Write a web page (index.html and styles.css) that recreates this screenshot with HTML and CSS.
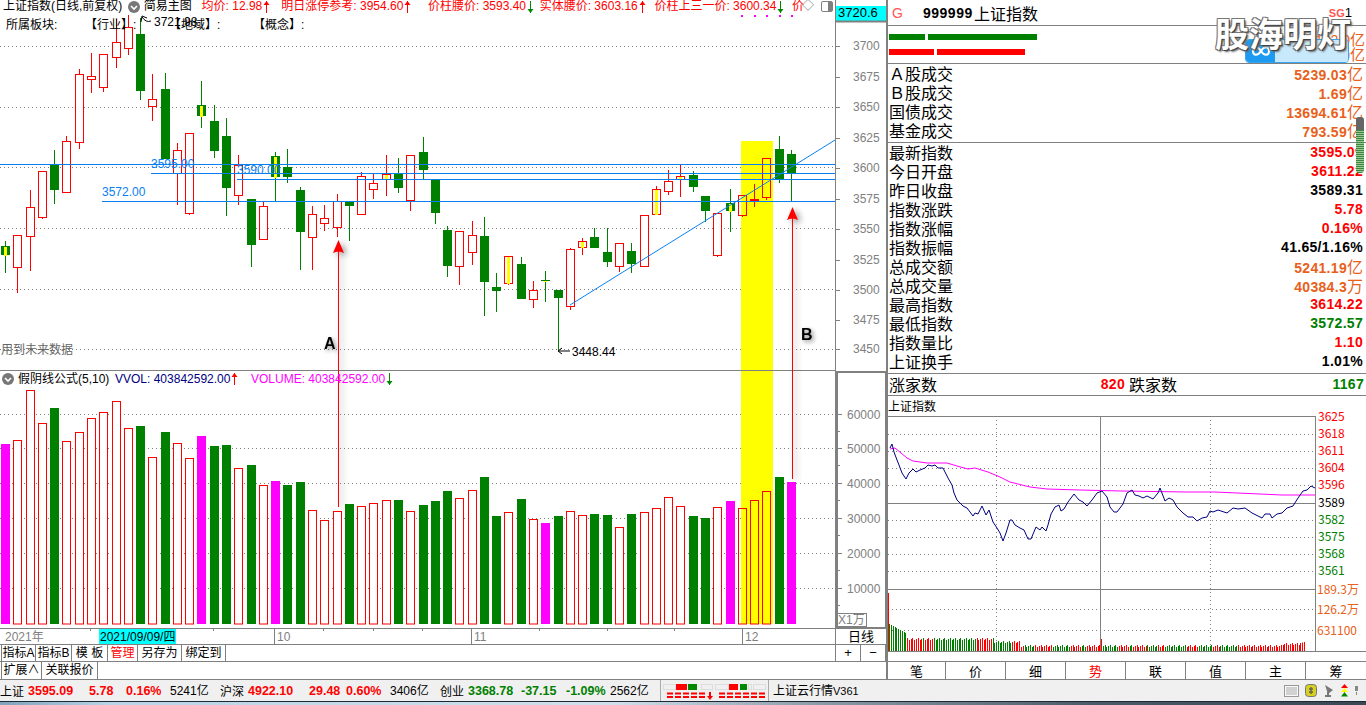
FILE: index.html
```html
<!DOCTYPE html>
<html lang="zh-CN">
<head>
    <meta charset="UTF-8">
    <title>上证指数</title>
    <link rel="stylesheet" href="styles.css">
</head>
<body>
    <svg class="defs" width="0" height="0">
        <symbol id="up" viewBox="0 0 7 12"><path d="M3.5 0v12" stroke="#f00" fill="none"/><path d="M3.5 0L6.5 4H.5z" fill="#f00"/></symbol>
        <symbol id="down" viewBox="0 0 7 12"><path d="M3.5 0v12" stroke="#080" fill="none"/><path d="M3.5 12L.5 8H6.5z" fill="#080"/></symbol>
        <symbol id="chevron" viewBox="0 0 12 12"><circle cx="6" cy="6" r="6" fill="#777"/><path d="M3 5l3 3 3-3" stroke="#fff" stroke-width="1.6" fill="none"/></symbol>
    </svg>
    <div class="app">
        <div class="workspace">
            <div class="left">
                <div class="charts">
                    <svg id="kline" class="kline" width="886" height="645"></svg>

                    <div class="quote-bar">
                        <span class="q-title">上证指数(日线,前复权)</span>
                        <svg class="ico12 q-chev"><use href="#chevron"/></svg>
                        <span class="q-main">简易主图</span>
                        <span class="q-item q-avg">均价: 12.98<svg class="arr"><use href="#up"/></svg></span>
                        <span class="q-item q-limit">明日涨停参考: 3954.60<svg class="arr"><use href="#up"/></svg></span>
                        <span class="q-item q-waist">价柱腰价: 3593.40<svg class="arr"><use href="#down"/></svg></span>
                        <span class="q-item q-body">实体腰价: 3603.16<svg class="arr"><use href="#up"/></svg></span>
                        <span class="q-item q-third">价柱上三一价: 3600.34<svg class="arr"><use href="#down"/></svg></span>
                        <span class="q-item q-cut">价</span>
                        <span class="q-diamond">◇</span>
                        <span class="q-panel"><i></i></span>
                    </div>
                    <div class="sector-bar">
                        <span class="s-first">所属板块:</span>
                        <span class="s-col">【行业】:</span>
                        <span class="s-col">【地域】:</span>
                        <span class="s-col">【概念】:</span>
                    </div>
                    <div class="future-note">用到未来数据</div>
                    <div class="vol-bar">
                        <svg class="ico12"><use href="#chevron"/></svg>
                        <span class="v-name">假阴线公式(5,10)</span>
                        <span class="v-wvol">VVOL: 403842592.00<svg class="arr"><use href="#up"/></svg></span>
                        <span class="v-vol">VOLUME: 403842592.00<svg class="arr"><use href="#down"/></svg></span>
                    </div>
                </div>
                <div class="tool-row">
                    <span class="tool t1">指标A</span>
                    <span class="tool t1">指标B</span>
                    <span class="tool t1">模 板</span>
                    <span class="tool t2 active">管理</span>
                    <span class="tool t3">另存为</span>
                    <span class="tool t3">绑定到</span>
                    <span class="tool-fill"></span>
                    <span class="zoom-btn">+</span>
                    <span class="zoom-btn">−</span>
                </div>
                <div class="ext-row">
                    <span class="tool t4">扩展∧</span>
                    <span class="tool t5">关联报价</span>
                </div>
            </div>

            <div class="right">
                <div class="r-head">
                    <span class="r-g">G</span>
                    <span class="r-code">999999</span>
                    <span class="r-name">上证指数</span>
                    <span class="r-sg">SG<b>1</b></span>
                </div>
                <div class="r-bars">
                    <div class="bar-line">
                        <i class="b-g b1"></i><i class="b-g b2"></i>
                        <span class="amt">102.0<em>亿</em></span>
                    </div>
                    <div class="bar-line">
                        <i class="b-r b3"></i><i class="b-r b4"></i>
                        <span class="amt">92.0<em>亿</em></span>
                    </div>
                </div>
                <div class="r-rows">
                    <div class="row"><span>Ａ股成交</span><span class="orange">5239.03<em>亿</em></span></div>
                    <div class="row"><span>Ｂ股成交</span><span class="orange">1.69<em>亿</em></span></div>
                    <div class="row"><span>国债成交</span><span class="orange">13694.61<em>亿</em></span></div>
                    <div class="row"><span>基金成交</span><span class="orange">793.59<em>亿</em></span></div>
                </div>
                <div class="r-rows r-rows-big">
                    <div class="row"><span>最新指数</span><span class="red">3595.09</span></div>
                    <div class="row"><span>今日开盘</span><span class="red">3611.22</span></div>
                    <div class="row"><span>昨日收盘</span><span class="black">3589.31</span></div>
                    <div class="row"><span>指数涨跌</span><span class="red">5.78</span></div>
                    <div class="row"><span>指数涨幅</span><span class="red">0.16%</span></div>
                    <div class="row"><span>指数振幅</span><span class="black">41.65/1.16%</span></div>
                    <div class="row"><span>总成交额</span><span class="orange">5241.19<em>亿</em></span></div>
                    <div class="row"><span>总成交量</span><span class="orange">40384.3<em>万</em></span></div>
                    <div class="row"><span>最高指数</span><span class="red">3614.22</span></div>
                    <div class="row"><span>最低指数</span><span class="green">3572.57</span></div>
                    <div class="row"><span>指数量比</span><span class="red">1.10</span></div>
                    <div class="row"><span>上证换手</span><span class="black">1.01%</span></div>
                </div>
                <div class="r-updown">
                    <span>涨家数</span>
                    <span class="red num">820</span>
                    <span>跌家数</span>
                    <span class="green num">1167</span>
                </div>
                <div class="r-label">上证指数</div>
                <svg id="intraday" class="intraday" width="478" height="245" viewBox="888 416 478 245"></svg>
                <div class="r-tabs">
                    <span>笔</span><span>价</span><span>细</span><span class="active">势</span><span>联</span><span>值</span><span>主</span><span>筹</span>
                </div>

                <div class="watermark">
                    <div class="wm-badge">
                        <span class="wm-logo">
                            <svg width="22" height="14" viewBox="0 0 22 14"><path d="M11 7C8 2 3 2 3 7s5 5 8 0 8-5 8 0-5 5-8 0" fill="none" stroke="#fff" stroke-width="2"/></svg>
                        </span>
                        <span class="wm-tail"></span>
                    </div>
                    <div class="wm-text">股海明灯</div>
                </div>
                <div class="side-scroll"></div>
            </div>
        </div>

        <div class="status">
            <div class="idx">
                <span class="cjk">上证</span><b class="red">3595.09</b><b class="red">5.78</b><b class="red">0.16%</b><span class="amount">5241<em>亿</em></span>
            </div>
            <div class="idx">
                <span class="cjk">沪深</span><b class="red">4922.10</b><b class="red">29.48</b><b class="red">0.60%</b><span class="amount">3406<em>亿</em></span>
            </div>
            <div class="idx idx-last">
                <span class="cjk">创业</span><b class="green">3368.78</b><b class="green">-37.15</b><b class="green">-1.09%</b><span class="amount">2562<em>亿</em></span>
            </div>
            <div class="breadth">
                <svg width="106" height="16" viewBox="0 0 106 16">
                    <g fill="none" stroke="#ddd">
                        <rect x=".5" y=".5" width="12" height="5"/><rect x="38.5" y=".5" width="11" height="5"/>
                        <rect x="52.5" y=".5" width="13" height="5"/><rect x="85.5" y=".5" width="3" height="5"/><rect x="90.5" y=".5" width="12" height="5"/>
                    </g>
                    <rect x="13" y="0" width="11" height="6" fill="#f00"/><rect x="25" y="0" width="9" height="6" fill="#080"/>
                    <rect x="66" y="0" width="9" height="6" fill="#f00"/><rect x="77" y="0" width="7" height="6" fill="#080"/>
                    <path d="M4 9.5H43M4 13H43M56 9.5H102M56 13H102" stroke="#f00" stroke-width="2" stroke-dasharray="6 2"/>
                    <path d="M46 8h2v4h2l-3 4-3-4h2z" fill="#f00"/>
                </svg>
            </div>
            <div class="brand"><span class="cjk">上证云行情</span><span class="ver">V361</span></div>
            <div class="tray">
                <svg width="15" height="12" viewBox="0 0 15 12"><rect x=".5" y=".5" width="14" height="11" fill="#f8f8f8" stroke="#999"/><path d="M2 3h11M2 5h11M2 7h11M2 9h11" stroke="#aaa"/></svg>
                <svg width="12" height="13" viewBox="0 0 12 13"><rect x=".5" y=".5" width="11" height="12" rx="3" fill="#d8d020" stroke="#777"/><path d="M6 3v7M4 5h4M4 8h4" stroke="#665" stroke-width="1.5"/></svg>
                <svg width="11" height="13" viewBox="0 0 11 13"><path d="M2 1l8 5-5 4z" fill="#777"/><path d="M5 8v3M2 12h6" stroke="#777" stroke-width="2"/></svg>
                <svg width="9" height="13" viewBox="0 0 9 13"><path d="M4.5 0L8 4H1z" fill="#f00"/><path d="M4.5 4L8 8H1z" fill="#ff0"/><path d="M4.5 8L8 12.5H1z" fill="#080"/></svg>
                <svg width="3" height="9" viewBox="0 0 3 9"><path d="M0 0h3v5H0zM1 6h1v3H1z" fill="#888"/></svg>
            </div>
        </div>
        <div class="taskbar"></div>
    </div>
    <script src="chart.js"></script>
</body>
</html>
```

FILE: styles.css
```css
* {
    box-sizing: border-box;
}
html, body {
    margin: 0;
    padding: 0;
    overflow: hidden;
}
body {
    font-family: "Liberation Sans", "Noto Sans CJK SC", sans-serif;
    font-size: 12px;
    background: #fff;
    color: #000;
}
em {
    font-style: normal;
    font-weight: normal;
}
.defs {
    position: absolute;
}
.app {
    width: 1366px;
    height: 705px;
    display: flex;
    flex-direction: column;
}
.workspace {
    height: 680px;
    display: flex;
    position: relative;
}
.left {
    width: 886px;
    flex: none;
}
.charts {
    position: relative;
    height: 645px;
}
.kline {
    display: block;
}

/* svg chart parts */
.grid {
    stroke: #808080;
    stroke-dasharray: 1 3;
    fill: none;
}
.axis {
    stroke: #808080;
    fill: none;
}
.axis-thick {
    stroke: #808080;
    stroke-width: 2;
    fill: none;
}
.tick-label {
    fill: #808080;
    font-size: 12px;
}
.hl {
    fill: #ff0;
}
.wick-g { stroke: #008000; }
.wick-r { stroke: #f00; }
.fill-g { fill: #008000; }
.fill-m { fill: #f0f; }
.fill-y { fill: #ff0; }
.fill-r { fill: #f00; }
.box-r {
    stroke: #f00;
    fill: #fff;
}
.box-r-clear {
    stroke: #f00;
    fill: none;
}
.blue-line {
    stroke: #0a80f0;
    fill: none;
}
.blue-label {
    fill: #0a80f0;
    font-size: 12px;
}
.mark {
    font-size: 12px;
    fill: #000;
}
.mark-line {
    stroke: #000;
    fill: none;
}
.call-out {
    filter: drop-shadow(3px 2px 3px rgba(0, 0, 0, 0.45));
}
.call-out line {
    stroke: #f00;
}
.call-out path {
    fill: #f00;
}
.call-letter {
    font-size: 16px;
    font-weight: bold;
    filter: drop-shadow(2px 2px 2px rgba(0, 0, 0, 0.45));
}
.dots {
    fill: #f0f;
}
.cyan {
    fill: #0ff;
}
.cyan-text {
    font-size: 13px;
    fill: #000;
}
.date-label {
    font-size: 12px;
    fill: #808080;
}
.date-cur {
    font-size: 12px;
    fill: #000;
}
.cell-text {
    font-size: 13px;
    fill: #000;
    font-family: "Noto Sans CJK SC", sans-serif;
}
.x1 {
    fill: #808080;
    font-size: 12px;
}

/* text lying over the chart */
.quote-bar {
    position: absolute;
    top: 0;
    left: 3px;
    height: 13px;
    width: 830px;
    display: flex;
    align-items: center;
    line-height: 13px;
    white-space: nowrap;
    color: #f00;
}
.q-title {
    color: #000;
    width: 125px;
}
.ico12 {
    width: 12px;
    height: 12px;
    flex: none;
}
.q-chev {
    margin-right: 4px;
}
.q-main {
    color: #000;
    width: 58px;
}
.q-item {
    display: flex;
    align-items: center;
}
.q-avg { width: 80px; }
.q-limit { width: 147px; }
.q-waist { width: 112px; }
.q-body { width: 115px; }
.q-third { width: 138px; }
.q-cut { width: 10px; }
.q-diamond {
    color: #808080;
    width: 19px;
}
.q-panel {
    width: 12px;
    height: 11px;
    border: 1px solid #808080;
    border-radius: 2px;
    display: flex;
    justify-content: flex-end;
}
.q-panel i {
    width: 4px;
    background: #808080;
}
.arr {
    width: 7px;
    height: 12px;
    margin-left: 1px;
    flex: none;
}
.sector-bar {
    position: absolute;
    top: 18px;
    left: 6px;
    display: flex;
    line-height: 14px;
    white-space: nowrap;
}
.s-first {
    width: 79px;
}
.s-col {
    width: 84px;
}
.future-note {
    position: absolute;
    left: 1px;
    top: 343px;
    color: #666;
    line-height: 14px;
}
.vol-bar {
    position: absolute;
    left: 2px;
    top: 372px;
    height: 14px;
    display: flex;
    align-items: center;
    white-space: nowrap;
    line-height: 14px;
}
.v-name {
    margin-left: 4px;
    width: 97px;
}
.v-wvol {
    display: flex;
    align-items: center;
    color: #000080;
    width: 136px;
}
.v-vol {
    display: flex;
    align-items: center;
    color: #f0f;
}

/* bottom left toolbars */
.tool-row, .ext-row {
    display: flex;
    border-bottom: 1px solid #808080;
    height: 17px;
}
.tool-row {
    width: 886px;
}
.ext-row {
    height: 18px;
    width: 886px;
}
.tool {
    border-right: 1px solid #808080;
    text-align: center;
    line-height: 16px;
    font-size: 12px;
    white-space: nowrap;
}
.tool:first-child {
    border-left: 1px solid #808080;
    margin-left: 1px;
}
.t1 { width: 36px; }
.t2 { width: 30px; }
.t3 { width: 44px; }
.t4 { width: 41px; }
.t5 { width: 56px; }
.tool.t1:first-child { width: 35px; }
.tool.active {
    color: #f00;
}
.tool-fill {
    flex: 1;
    border-right: 1px solid #808080;
}
.zoom-btn {
    width: 25px;
    text-align: center;
    border-right: 1px solid #808080;
    line-height: 15px;
    font-size: 13px;
}

/* right panel */
.right {
    flex: 1;
    position: relative;
    border-left: 2px solid #808080;
    font-family: "Noto Sans CJK SC", sans-serif;
    font-size: 16px;
}
.r-head {
    height: 26px;
    border-bottom: 1px solid #808080;
    display: flex;
    align-items: center;
    padding-left: 4px;
    line-height: 20px;
}
.r-g {
    color: #f55;
    font: 14px "Liberation Sans", sans-serif;
    width: 31px;
}
.r-code {
    font: bold 14px "Liberation Sans", sans-serif;
    letter-spacing: 0.5px;
    width: 51px;
}
.r-name {
    font-size: 16px;
}
.r-sg {
    margin-left: auto;
    margin-right: 14px;
    font: bold 11px "Liberation Sans", sans-serif;
    color: #f55;
}
.r-sg b {
    color: #000;
    font-weight: normal;
    font-size: 13px;
}
.r-bars {
    height: 38px;
    border-bottom: 1px solid #808080;
    padding: 8px 1px 0 1px;
}
.bar-line {
    display: flex;
    height: 15px;
    align-items: flex-start;
}
.bar-line i {
    display: block;
    height: 6px;
    margin-right: 3px;
}
.b-g { background: #008000; }
.b-r { background: #f00; }
.b1 { width: 36px; }
.b2 { width: 109px; }
.b3 { width: 45px; }
.b4 { width: 88px; }
.amt {
    margin-left: auto;
    color: #e8601a;
    font: 14px/12px "Liberation Sans", "Noto Sans CJK SC", sans-serif;
}
.amt em {
    font-size: 15px;
}
.r-rows {
    padding: 0 0 2px;
    border-bottom: 1px solid #808080;
}
.row {
    display: flex;
    justify-content: space-between;
    height: 19px;
    line-height: 19px;
    padding: 0 3px 0 1px;
    white-space: nowrap;
}
.row span + span {
    font: bold 14px/19px "Liberation Sans", sans-serif;
    letter-spacing: 0.3px;
}
.row em {
    font-family: "Noto Sans CJK SC", sans-serif;
    font-size: 16px;
    letter-spacing: 0;
}
.red { color: #f00; }
.green { color: #008000; }
.black { color: #000; }
.orange { color: #e8601a; }
.r-updown {
    height: 22px;
    border-bottom: 1px solid #808080;
    display: grid;
    grid-template-columns: 177px 59px 4px auto 1fr;
    line-height: 21px;
    padding: 0 2px 0 1px;
}
.r-updown span:nth-child(2) {
    text-align: right;
}
.r-updown span:nth-child(3) {
    grid-column: 4;
}
.r-updown span:nth-child(4) {
    grid-column: 5;
    text-align: right;
}
.r-updown .num {
    font: bold 14px/21px "Liberation Sans", sans-serif;
    letter-spacing: 0.3px;
}
.r-label {
    height: 20px;
    font-size: 12px;
    line-height: 20px;
}
.intraday {
    display: block;
    overflow: visible;
}
.r-tabs {
    height: 19px;
    display: flex;
    border-top: 1px solid #808080;
    border-bottom: 1px solid #808080;
    font-size: 13px;
    line-height: 17px;
    text-align: center;
}
.r-tabs span {
    width: 60px;
    border-right: 1px solid #808080;
}
.r-tabs span:first-child {
    width: 58px;
}
.r-tabs span:last-child {
    flex: 1;
    border-right: none;
}
.r-tabs .active {
    color: #f00;
}
.price-red { fill: #f00; font-size: 12px; }
.price-black { fill: #000; font-size: 12px; }
.price-green { fill: #008000; font-size: 12px; }
.price-orange { fill: #e8601a; font-size: 12px; }
.line-price {
    stroke: #000080;
    fill: none;
}
.line-avg {
    stroke: #f0f;
    fill: none;
}

/* watermark over the quote panel */
.watermark {
    position: absolute;
    left: 327px;
    top: 12px;
    width: 135px;
    height: 52px;
}
.wm-badge {
    position: absolute;
    left: 30px;
    top: 27px;
    width: 104px;
    height: 24px;
    border-radius: 4px;
    display: flex;
    overflow: hidden;
    border: 1px solid #3aa5ee;
}
.wm-logo {
    width: 29px;
    background: #1e9bf0;
    display: flex;
    align-items: center;
    justify-content: center;
}
.wm-tail {
    flex: 1;
    background: #c8e8fb;
}
.wm-text {
    position: absolute;
    left: 0;
    top: -2px;
    font-size: 34px;
    line-height: 46px;
    font-weight: bold;
    white-space: nowrap;
    color: #fff;
    text-shadow: 1px 1px 0 #444, -1px -1px 0 #777, 1px -1px 0 #777, -1px 1px 0 #777, 2px 2px 2px #666;
}
.side-scroll {
    position: absolute;
    left: 468px;
    top: 117px;
    width: 8px;
    height: 56px;
    border-radius: 3px;
    background: repeating-linear-gradient(#3a8a3a 0 1px, #9cc59c 1px 2px) 0 13px no-repeat, #666;
}

/* status bar */
.status {
    height: 21px;
    background: #f0f0f0;
    display: flex;
    align-items: center;
    white-space: nowrap;
    line-height: 20px;
}
.idx {
    width: 220px;
    display: grid;
    grid-template-columns: 28px 61px 37px 44px auto;
    flex: none;
}
.idx-last {
    grid-template-columns: 28px 53px 45px 44px auto;
}
.status .cjk {
    font-family: "Noto Sans CJK SC", sans-serif;
    font-size: 12px;
}
.status .amount {
    font-size: 12px;
}
.status b {
    font-size: 12.5px;
}
.breadth {
    border-left: 1px solid #aaa;
    border-right: 1px solid #aaa;
    height: 21px;
    width: 109px;
    padding: 4px 0 0 2px;
    flex: none;
}
.brand {
    margin-left: 4px;
}
.brand .ver {
    font-size: 11px;
}
.tray {
    margin-left: auto;
    margin-right: 8px;
    display: flex;
    align-items: center;
    gap: 6px;
}
.taskbar {
    height: 4px;
    border-top: 1px solid #1c2a38;
    background: linear-gradient(90deg, #7fa3bb 0, #b8d4e6 8%, #d0dfea 45%, #8a9aa6 60%, #4a5a68 80%, #3a4854 100%);
}
```

FILE: chart.js
```js
// [type, high, bodyTop, bodyBottom, low] in screen pixels
var CANDLES = [
    ['gy',241,246,255,273], ['r',235,235,267,293], ['r',190,207,236,271], ['r',171,171,217,219],
    ['g',150,165,190,204], ['r',136,141,192,192], ['r',69,74,142,149], ['r',53,76,79,93],
    ['r',54,54,87,92], ['r',19,42,57,68], ['r',15,27,48,55], ['g',18,34,91,100],
    ['r',74,99,106,121], ['g',73,89,159,159], ['r',143,150,173,205], ['r',133,133,213,215],
    ['gy',81,105,116,128], ['g',105,121,151,158], ['g',118,136,188,216], ['r',155,165,195,205],
    ['g',199,199,245,267], ['r',201,206,239,239], ['gy',152,156,177,201], ['g',149,167,177,183],
    ['g',187,190,232,270], ['r',206,214,237,270], ['r',205,218,223,231], ['r',194,201,227,237],
    ['g',201,201,206,241], ['r',172,176,214,215], ['r',174,183,189,199], ['ry',155,174,179,196],
    ['g',158,174,188,193], ['r',155,155,200,211], ['g',137,152,170,179], ['g',179,179,213,224],
    ['g',226,230,266,277], ['r',231,231,266,285], ['r',221,235,252,265], ['g',217,236,282,316],
    ['g',273,287,291,312], ['ry',256,256,283,285], ['g',257,264,299,299], ['r',281,290,299,308],
    ['gy',271,280,281,302], ['g',290,290,298,350], ['r',248,249,306,310], ['ry',238,241,247,255],
    ['g',228,237,248,248], ['g',228,252,262,267], ['r',243,243,266,272], ['g',243,251,264,273],
    ['r',215,215,266,267], ['ry',186,189,214,214], ['r',170,181,191,195], ['ry',165,176,179,197],
    ['g',171,175,187,192], ['g',196,196,211,222], ['r',213,213,255,257], ['gy',189,203,211,232],
    ['r',195,195,215,217], ['rf',184,199,201,207], ['r',158,158,197,200], ['g',136,149,179,183],
    ['g',150,154,173,201]
];

// g green, r red outline, m magenta; top y of each volume bar
var VOLUMES = [
    ['m',444],['r',440],['r',390],['r',423],['g',408],['r',441],['r',432],['r',418],['r',412],['r',401],
    ['r',428],['g',426],['r',457],['g',432],['r',443],['r',458],['m',436],['g',446],['g',445],['r',468],
    ['g',465],['r',485],['m',481],['g',485],['g',482],['r',510],['r',520],['r',511],['g',504],['r',506],
    ['r',503],['r',500],['g',500],['r',511],['g',505],['g',501],['g',491],['r',498],['r',490],['g',477],
    ['g',516],['r',512],['g',499],['r',519],['m',523],['g',516],['r',511],['r',515],['g',514],['g',515],
    ['r',527],['g',514],['r',512],['r',508],['r',497],['r',506],['g',516],['g',518],['r',507],['m',501],
    ['r',508],['r',500],['r',491],['g',477],['m',482]
];

var VOL_BOTTOM = 623.5;
var SEE_THROUGH = { 60: true, 61: true, 62: true };
var PRICE_TICKS = [46, 77, 107, 138, 168, 199, 229, 260, 290, 320, 349];

function barX(i) {
    return Math.floor(5.5 + 12.28 * i);
}

function line(x1, y1, x2, y2, cls) {
    return '<line x1="' + x1 + '" y1="' + y1 + '" x2="' + x2 + '" y2="' + y2 + '" class="' + cls + '"/>';
}

function rect(x, y, w, h, cls) {
    return '<rect x="' + x + '" y="' + y + '" width="' + w + '" height="' + h + '" class="' + cls + '"/>';
}

function text(x, y, str, cls) {
    return '<text x="' + x + '" y="' + y + '" class="' + cls + '">' + str + '</text>';
}

function candle(c, i) {
    var type = c[0], high = c[1], top = c[2], bottom = c[3], low = c[4];
    var x = barX(i), wick = x + 0.5, red = type.charAt(0) === 'r';
    var wickCls = red ? 'wick-r' : 'wick-g';
    var out = line(wick, high, wick, top, wickCls) + line(wick, bottom, wick, low, wickCls);
    if (type === 'rf') {
        out += rect(x - 4, top, 9, bottom - top, 'fill-r');
    } else if (red) {
        out += rect(x - 3.5, top + 0.5, 8, bottom - top, SEE_THROUGH[i] ? 'box-r-clear' : 'box-r');
    } else {
        out += rect(x - 4, top, 9, bottom - top, 'fill-g');
    }
    if (type.charAt(1) === 'y') {
        out += rect(x - 1, top + 1, 3, bottom - top, 'fill-y');
    }
    return out;
}

function volumeBar(v, i) {
    var x = barX(i);
    if (v[0] === 'r') {
        return rect(x - 3.5, v[1] + 0.5, 8, VOL_BOTTOM - v[1], SEE_THROUGH[i] ? 'box-r-clear' : 'box-r');
    }
    return rect(x - 4, v[1], 9, VOL_BOTTOM + 0.5 - v[1], v[0] === 'm' ? 'fill-m' : 'fill-g');
}

function callOut(x, tip, end) {
    return '<g class="call-out">' + line(x, tip + 8, x, end, '') +
        '<path d="M' + x + ' ' + tip + 'l5.5 13q-5.5-3-11 0z"/></g>';
}

function drawKline() {
    var s = '';

    [46.5, 107.5, 167.5, 228.5, 289.5, 349.5, 414.5, 448.5, 483.5, 518.5, 553.5, 588.5].forEach(function (y) {
        s += line(0, y, 835, y, 'grid');
    });

    s += rect(741, 141, 32, 483, 'hl');
    s += line(0, 370.5, 836, 370.5, 'axis');

    CANDLES.forEach(function (c, i) { s += candle(c, i); });
    VOLUMES.forEach(function (v, i) { s += volumeBar(v, i); });

    // hand drawn support lines
    s += line(0, 164.5, 835, 164.5, 'blue-line') + line(151, 173.5, 835, 173.5, 'blue-line');
    s += line(237, 179.5, 835, 179.5, 'blue-line') + line(102, 201.5, 835, 201.5, 'blue-line');
    s += line(570, 305, 835, 140, 'blue-line');
    s += text(151, 168, '3595.00', 'blue-label') + text(237, 174, '3590.00', 'blue-label');
    s += text(102, 196, '3572.00', 'blue-label');

    [741, 754, 766, 779, 791].forEach(function (x) { s += rect(x, 15, 2, 2, 'dots'); });

    s += '<path d="M142 16l-1 6M142 16l5 2M142 17q4 6 9 4" class="mark-line"/>';
    s += text(154, 26, '3721.98', 'mark');
    s += '<path d="M558 351h12M558 351l4-3M558 351l4 3" class="mark-line"/>';
    s += text(572, 356, '3448.44', 'mark');

    s += callOut(338.5, 240, 507) + callOut(792.5, 207, 479);
    s += text(324, 349, 'A', 'call-letter') + text(801, 340, 'B', 'call-letter');

    // price axis
    s += line(835.5, 0, 835.5, 645, 'axis');
    s += rect(836, 6, 50, 15, 'cyan') + line(836, 21.5, 886, 21.5, 'axis-thick');
    s += text(838, 17, '3720.6', 'cyan-text');
    PRICE_TICKS.forEach(function (y, i) {
        s += line(836, y + 0.5, 840, y + 0.5, 'axis');
        s += text(853, y + 4, 3700 - 25 * i, 'tick-label');
    });

    // volume axis
    s += rect(837, 372, 49, 256, 'axis-thick');
    [60000, 50000, 40000, 30000, 20000, 10000].forEach(function (v, n) {
        var y = Math.floor(414 + 34.8 * n) + 0.5;
        s += line(837, y, 842, y, 'axis') + line(837, y + 17, 840, y + 17, 'axis');
        s += text(847, y + 4, v, 'tick-label');
    });
    s += rect(837.5, 613.5, 29, 13, 'axis') + text(838, 624, 'X1万', 'x1');

    // date axis
    s += line(0, 628.5, 836, 628.5, 'axis') + line(0, 644.5, 886, 644.5, 'axis');
    [90, 213, 323, 373, 422, 539, 607, 674].forEach(function (x) {
        s += line(x + 0.5, 629, x + 0.5, 631, 'axis');
    });
    [274, 471, 742].forEach(function (x) {
        s += line(x + 0.5, 629, x + 0.5, 644, 'axis');
    });
    s += rect(99, 629, 77, 15, 'cyan');
    s += text(5, 641, '2021年', 'date-label') + text(100, 641, '2021/09/09/四', 'date-cur');
    s += text(277, 641, '10', 'date-label') + text(474, 641, '11', 'date-label') + text(745, 641, '12', 'date-label');
    s += text(848, 641, '日线', 'cell-text');

    document.getElementById('kline').innerHTML = s;
}

// price path of the day in screen pixels
var PRICE = [
    [890,448],[892,444],[894,452],[897,460],[899,465],[902,473],[906,479],[909,473],[913,469],[916,472],
    [920,470],[925,468],[928,465],[932,466],[935,465],[938,468],[943,468],[948,478],[952,485],[954,493],
    [957,500],[963,506],[967,508],[973,516],[975,513],[978,514],[982,506],[986,515],[989,510],[993,522],
    [997,528],[1000,533],[1003,541],[1006,533],[1010,520],[1012,520],[1015,525],[1020,528],[1024,530],[1028,539],
    [1031,539],[1036,527],[1040,530],[1042,527],[1046,531],[1048,525],[1051,514],[1055,507],[1059,505],[1061,511],
    [1064,509],[1068,502],[1074,494],[1079,500],[1083,502],[1087,506],[1092,500],[1097,493],[1102,491],[1107,497],
    [1110,507],[1114,512],[1117,512],[1123,504],[1127,493],[1132,490],[1135,495],[1139,496],[1143,498],[1147,496],
    [1153,499],[1158,493],[1160,488],[1165,501],[1169,498],[1173,500],[1177,507],[1183,513],[1188,517],[1193,517],
    [1197,521],[1202,518],[1207,517],[1210,511],[1213,512],[1218,510],[1227,513],[1233,508],[1238,509],[1245,508],
    [1252,513],[1262,518],[1265,514],[1270,514],[1272,518],[1277,514],[1282,513],[1287,508],[1293,506],[1298,498],
    [1303,491],[1307,490],[1311,486],[1315,488]
];

var AVERAGE = [
    [890,449],[895,448],[907,458],[913,461],[927,463],[947,463],[957,466],[968,469],[975,468],[988,472],
    [1000,477],[1010,482],[1030,487],[1047,489],[1080,490],[1122,491],[1187,492],[1215,492],[1260,494],[1282,495],[1315,495]
];

// runs of intraday volume bars: [count, colour]
var VOL_RUNS = [
    [1,'r'],[10,'g'],[9,'r'],[1,'g'],[5,'r'],[24,'g'],[9,'r'],[11,'g'],[7,'r'],[6,'g'],
    [10,'r'],[10,'g'],[6,'r'],[3,'g'],[8,'r'],[1,'r'],[9,'g'],[6,'r'],[2,'g'],[8,'r'],
    [6,'g'],[4,'r'],[6,'g'],[6,'g'],[7,'r'],[8,'g'],[4,'r'],[10,'g'],[9,'r'],[29,'r']
];

function intradayHeight(k) {
    var wobble = (k * 7) % 3;
    if (k === 0) return 58;
    if (k < 11) return 28 - k;
    if (k < 60) return 11 + wobble;
    if (k < 75) return 8 + wobble;
    if (k === 120) return 12;
    if (k < 222) return 4 + wobble;
    if (k < 232) return 6 + wobble;
    return 8 + (k - 232) / 2;
}

function polyline(points, cls) {
    return '<polyline points="' + points.join(' ') + '" class="' + cls + '"/>';
}

function drawIntraday() {
    var s = '', k = 0;

    [434, 451, 468, 485, 520, 537, 554, 571, 609, 630].forEach(function (y) {
        s += line(888, y + 0.5, 1315, y + 0.5, 'grid');
    });
    [996, 1210].forEach(function (x) {
        s += line(x + 0.5, 416, x + 0.5, 651, 'grid');
    });
    s += line(1100.5, 416, 1100.5, 651, 'axis');
    s += line(888, 416.5, 1315, 416.5, 'axis') + line(888, 503.5, 1315, 503.5, 'axis');
    s += line(888, 589.5, 1315, 589.5, 'axis') + line(888, 651.5, 1366, 651.5, 'axis');
    s += line(1315.5, 416, 1315.5, 651, 'axis');

    VOL_RUNS.forEach(function (run) {
        for (var n = 0; n < run[0] && k < 239; n++, k++) {
            var x = 888 + Math.floor(k * 1.78), h = intradayHeight(k);
            s += rect(x, 651 - h, 1, h, run[1] === 'r' ? 'fill-r' : 'fill-g');
        }
    });

    s += polyline(AVERAGE, 'line-avg') + polyline(PRICE, 'line-price');

    [[3625,'red'],[3618,'red'],[3611,'red'],[3604,'red'],[3596,'red'],[3589,'black'],
     [3582,'green'],[3575,'green'],[3568,'green'],[3561,'green']].forEach(function (p, n) {
        s += text(1318, Math.round(421 + 17.1 * n), p[0], 'price-' + p[1]);
    });
    s += text(1317, 594, '189.3万', 'price-orange') + text(1317, 614, '126.2万', 'price-orange');
    s += text(1317, 635, '631100', 'price-orange');

    document.getElementById('intraday').innerHTML = s;
}

drawKline();
drawIntraday();
```
